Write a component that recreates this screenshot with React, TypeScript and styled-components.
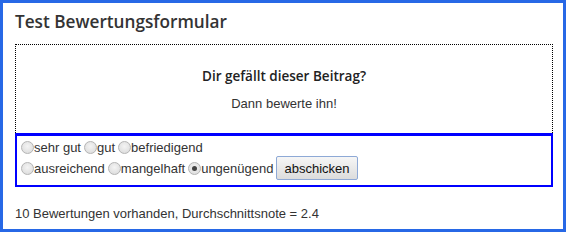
import styled, { createGlobalStyle } from "styled-components";

const Global = createGlobalStyle`
  html, body { margin: 0; padding: 0; background: #fff; }
`;

const Frame = styled.div`
  box-sizing: border-box;
  width: 566px;
  height: 232px;
  border: 3px solid #2768e6;
  padding: 6px 9px 0 12px;
  color: #333;
`;

const Title = styled.h1`
  margin: 0 0 10px 0;
  font-family: "Open Sans", sans-serif;
  font-weight: 600;
  font-size: 17.2px;
  line-height: 25px;
`;

const Teaser = styled.div`
  border: 1px dotted #000;
  border-bottom: none;
  height: 89px;
  display: flex;
  flex-direction: column;
  align-items: center;
  text-align: center;
  padding-top: 21px;
  box-sizing: border-box;
  margin-right: 1px;
`;

const Question = styled.div`
  font-family: "Open Sans", sans-serif;
  font-weight: 600;
  font-size: 13.5px;
  line-height: 20px;
  color: #222;
`;

const Hint = styled.div`
  margin-top: 10px;
  font-family: "Liberation Sans", Arial, sans-serif;
  font-size: 13px;
  line-height: 16px;
`;

const RatingForm = styled.form`
  border: 2px solid #0000ff;
  border-top-width: 3px;
  height: 54px;
  box-sizing: border-box;
  margin: 0 1px 0 0;
  padding: 2px 4px 0;
  font-family: "Liberation Sans", Arial, sans-serif;
  font-size: 13px;
  color: #333;
`;

const Row = styled.div<{ tall?: boolean }>`
  display: flex;
  align-items: center;
  height: ${(p) => (p.tall ? "24px" : "18px")};
`;

const Option = styled.label`
  display: inline-flex;
  align-items: center;
  margin-right: 3px;
  white-space: nowrap;
`;

const Dot = styled.span<{ checked?: boolean }>`
  display: inline-block;
  box-sizing: border-box;
  width: 13px;
  height: 13px;
  border-radius: 50%;
  border: 1px solid #b4b4b4;
  background: radial-gradient(circle at 50% 40%, #f4f4f4 0%, #d8d8d8 100%);
  position: relative;
  &::after {
    content: "";
    display: ${(p) => (p.checked ? "block" : "none")};
    position: absolute;
    left: 3px;
    top: 3px;
    width: 5px;
    height: 5px;
    border-radius: 50%;
    background: #444;
  }
`;

const Submit = styled.button`
  font-family: "Liberation Sans", Arial, sans-serif;
  font-size: 13px;
  color: #111;
  height: 24px;
  padding: 0 7px;
  border: 1px solid #8ea9d6;
  border-radius: 2px;
  background: linear-gradient(#f6f6f6, #dcdcdc);
`;

const Summary = styled.p`
  margin: 19px 0 0 0;
  font-family: "Liberation Sans", Arial, sans-serif;
  font-size: 13px;
  line-height: 16px;
  color: #333;
`;

const options = [
  ["sehr gut", "gut", "befriedigend"],
  ["ausreichend", "mangelhaft", "ungenügend"],
];

export default function App() {
  return (
    <>
      <Global />
      <Frame>
        <Title>Test Bewertungsformular</Title>
        <Teaser>
          <Question>Dir gefällt dieser Beitrag?</Question>
          <Hint>Dann bewerte ihn!</Hint>
        </Teaser>
        <RatingForm onSubmit={(e) => e.preventDefault()}>
          <Row>
            {options[0].map((o) => (
              <Option key={o}>
                <Dot />
                {o}
              </Option>
            ))}
          </Row>
          <Row tall>
            {options[1].map((o) => (
              <Option key={o}>
                <Dot checked={o === "ungenügend"} />
                {o}
              </Option>
            ))}
            <Submit type="submit">abschicken</Submit>
          </Row>
        </RatingForm>
        <Summary>10 Bewertungen vorhanden, Durchschnittsnote = 2.4</Summary>
      </Frame>
    </>
  );
}
